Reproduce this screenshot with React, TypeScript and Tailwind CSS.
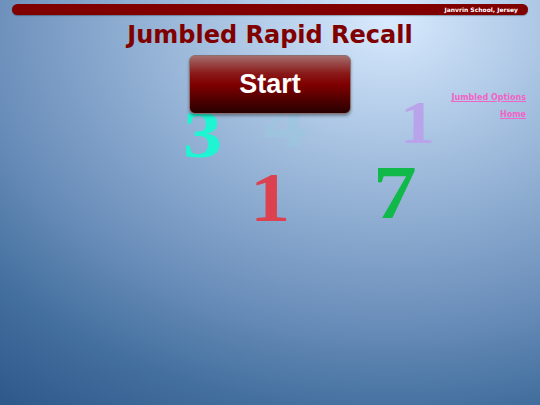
import React from "react";

const digits = [
  { ch: "3", left: 183, top: 94, size: 68, color: "#1ff5d2", opacity: 1 },
  { ch: "4", left: 264, top: 79, size: 74, color: "#9cc6df", opacity: 0.75 },
  { ch: "1", left: 250, top: 157, size: 70, color: "#dc4150", opacity: 1 },
  { ch: "1", left: 400, top: 86, size: 61, color: "#b9a3ea", opacity: 1 },
  { ch: "7", left: 373, top: 148, size: 76, color: "#11b94a", opacity: 1 },
];

export default function App() {
  return (
    <div className="relative w-[540px] h-[405px] overflow-hidden bg-[radial-gradient(560px_420px_at_389px_20px,#d8eafe_0%,#a8c3e2_30%,#6a8eba_72%,#44709f_93%,#2d588a_115%)] font-['DejaVu_Sans',Verdana,sans-serif]">
      <div className="mx-[12px] mt-[4px] h-[11px] rounded-full bg-[#800000] flex items-center justify-end pr-[10px] shadow-[0_1px_1px_rgba(0,0,0,0.3)]">
        <span className="text-white font-bold text-[6px] leading-none">Janvrin School, Jersey</span>
      </div>
      <h1 className="mt-[6px] text-center text-[#800000] font-bold text-[24px] leading-[28px]">
        Jumbled Rapid Recall
      </h1>
      <div className="relative">
        {digits.map((d, i) => (
          <span
            key={i}
            className="absolute origin-left scale-x-[1.15] font-['Liberation_Serif',serif] font-bold leading-none"
            style={{ left: d.left, top: d.top - 43, fontSize: d.size, color: d.color, opacity: d.opacity }}
          >
            {d.ch}
          </span>
        ))}
        <div className="relative z-10 flex justify-center pt-[6px]">
          <button className="w-[162px] h-[59px] rounded-[6px] border border-[#8a7070] bg-[linear-gradient(to_bottom,#a56c6c_0%,#8a1a1a_30%,#800000_50%,#4a0000_80%,#280000_100%)] shadow-[0_2px_3px_rgba(0,0,0,0.35)] text-white font-['Liberation_Sans',Arial,sans-serif] font-bold text-[27px] leading-none">
            Start
          </button>
        </div>
        <div className="absolute right-[14px] top-[43px] flex flex-col items-end gap-[6px] text-[8px] font-bold text-[#f064c6] leading-[11px]">
          <a className="underline">Jumbled Options</a>
          <a className="underline">Home</a>
        </div>
      </div>
    </div>
  );
}
